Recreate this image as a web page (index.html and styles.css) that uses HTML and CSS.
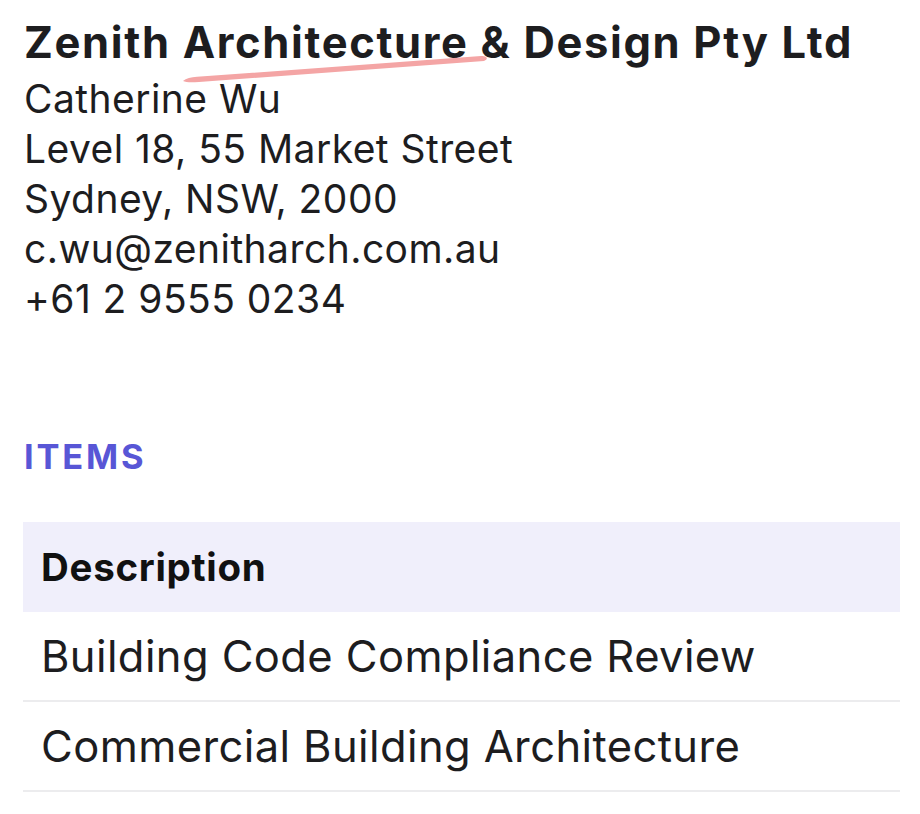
FILE: index.html
```html
<!DOCTYPE html>
<html lang="en">
<head>
<meta charset="utf-8">
<title>Invoice</title>
<link rel="stylesheet" href="styles.css">
</head>
<body>
<div class="page">
  <section class="from">
    <h1 class="company">Zenith Architecture &amp; Design Pty Ltd</h1>
    <div class="line">Catherine Wu</div>
    <div class="line">Level 18, 55 Market Street</div>
    <div class="line">Sydney, NSW, 2000</div>
    <div class="line">c.wu@zenitharch.com.au</div>
    <div class="line">+61 2 9555 0234</div>
    <svg class="mark" width="320" height="32" viewBox="0 0 320 32" aria-hidden="true">
      <path d="M2 27 C 5 24.5, 10 23.3, 16 22.8 L 300 2 C 306 1.5, 308 5, 303 7 L 18 28 C 11 28.5, 5 28.6, 2 27 Z" fill="#f4a5a5"/>
    </svg>
  </section>
  <section class="items">
    <h2 class="section-title">ITEMS</h2>
    <table class="table">
      <thead>
        <tr><th>Description</th></tr>
      </thead>
      <tbody>
        <tr><td>Building Code Compliance Review</td></tr>
        <tr><td>Commercial Building Architecture</td></tr>
      </tbody>
    </table>
  </section>
</div>
</body>
</html>
```
FILE: styles.css
```css
html, body {
  margin: 0;
  padding: 0;
  background: #ffffff;
}
body {
  font-family: Inter, "Noto Sans", "Liberation Sans", sans-serif;
  color: #1d1d1f;
}
.page {
  padding: 16px 20px 0 24px;
}
.from {
  position: relative;
}
.company {
  margin: 0 0 6px 0;
  font-size: 43.5px;
  font-weight: 700;
  line-height: 52px;
  letter-spacing: 1.65px;
}
.line {
  font-size: 39px;
  line-height: 50px;
  font-weight: 400;
  letter-spacing: 0.45px;
}
.mark {
  position: absolute;
  left: 157px;
  top: 38px;
}
.items {
  margin-top: 112px;
}
.section-title {
  margin: 0 0 44px 0;
  font-size: 34.5px;
  line-height: 42px;
  font-weight: 700;
  letter-spacing: 2.8px;
  color: #5856d6;
}
.table {
  width: 877px;
  margin-left: -1px;
  border-collapse: collapse;
}
.table th {
  background: #f0effb;
  text-align: left;
  font-size: 38.5px;
  font-weight: 700;
  letter-spacing: 0.7px;
  color: #111;
  height: 90px;
  padding: 0 18px;
}
.table td {
  font-size: 43.5px;
  font-weight: 400;
  letter-spacing: 0.4px;
  height: 88px;
  padding: 0 18px;
  border-bottom: 2px solid #ececee;
}
```
